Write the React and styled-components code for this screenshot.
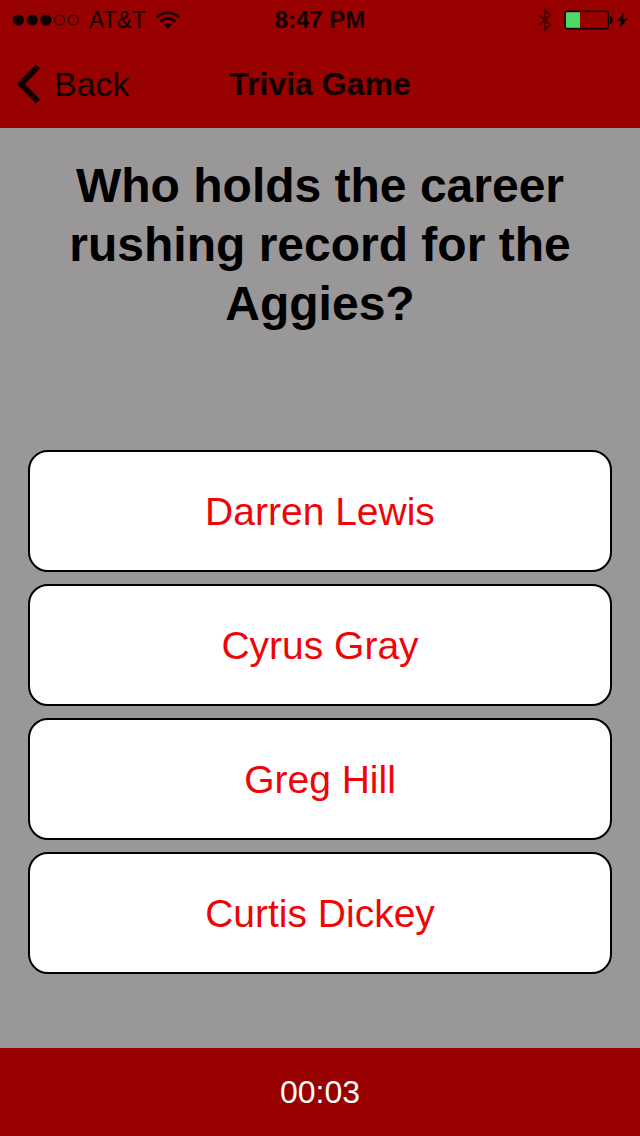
import React, { useState } from "react";
import styled, { createGlobalStyle, ThemeProvider } from "styled-components";

const theme = {
  colors: {
    maroon: "#990000",
    barText: "#120000",
    page: "#9a9799",
    answer: "#ee0508",
    charge: "#4cd964",
  },
  font: '"Liberation Sans", Arial, sans-serif',
};

const GlobalStyle = createGlobalStyle`
  * {
    box-sizing: border-box;
  }

  body {
    margin: 0;
    font-family: ${(props) => props.theme.font};
    background: ${(props) => props.theme.colors.page};
  }
`;

const Screen = styled.div`
  display: flex;
  flex-direction: column;
  min-height: 100vh;
  background: ${(props) => props.theme.colors.page};
`;

const Header = styled.header`
  background: ${(props) => props.theme.colors.maroon};
  color: ${(props) => props.theme.colors.barText};
`;

const StatusBar = styled.div`
  display: grid;
  grid-template-columns: 1fr auto 1fr;
  align-items: center;
  height: 40px;
  padding: 0 12px;
  font-size: 24px;
  line-height: 28px;
`;

const StatusGroup = styled.div`
  display: flex;
  align-items: center;
  justify-content: ${(props) => (props.$end ? "flex-end" : "flex-start")};
  gap: ${(props) => (props.$end ? "12px" : "9px")};
`;

const Carrier = styled.span`
  font-size: 23px;
`;

const Clock = styled.time`
  font-weight: 700;
`;

const NavBar = styled.nav`
  display: grid;
  grid-template-columns: 1fr auto 1fr;
  align-items: center;
  height: 88px;
  padding: 0 16px;
`;

const BackLink = styled.a`
  display: flex;
  align-items: center;
  gap: 12px;
  color: inherit;
  font-size: 34px;
  line-height: 40px;
  text-decoration: none;
`;

const Title = styled.h1`
  margin: 0;
  font-size: 32px;
  font-weight: 700;
  line-height: 40px;
`;

const Content = styled.main`
  display: flex;
  flex: 1;
  flex-direction: column;
  padding: 28px;
`;

const Question = styled.h2`
  min-height: 294px;
  margin: 0;
  color: #000;
  font-size: 48px;
  font-weight: 700;
  line-height: 59px;
  text-align: center;
`;

const Answers = styled.div`
  display: flex;
  flex-direction: column;
  gap: 12px;
`;

const AnswerButton = styled.button`
  height: 122px;
  padding: 2px 20px 0;
  border: 2px solid #000;
  border-radius: 20px;
  background: #fff;
  color: ${(props) => props.theme.colors.answer};
  font-family: inherit;
  font-size: 39px;
  line-height: 48px;
  cursor: pointer;
`;

const Footer = styled.footer`
  display: flex;
  align-items: center;
  justify-content: center;
  height: 88px;
  background: ${(props) => props.theme.colors.maroon};
  color: #fff;
  font-size: 32px;
  line-height: 40px;
`;

const SignalIcon = () => (
  <svg width="68" height="12" viewBox="0 0 68 12" aria-hidden="true">
    {[0, 1, 2, 3, 4].map((i) => (
      <circle
        key={i}
        cx={6.5 + i * 13.7}
        cy="6"
        r={i < 3 ? 5.6 : 5}
        fill={i < 3 ? "currentColor" : "none"}
        stroke={i < 3 ? "none" : "currentColor"}
      />
    ))}
  </svg>
);

const WifiIcon = () => (
  <svg
    width="26"
    height="18"
    viewBox="0 0 26 18"
    fill="none"
    stroke="currentColor"
    strokeWidth="2.7"
    aria-hidden="true"
  >
    <path d="M1.8 6.3a16 16 0 0 1 22.4 0" />
    <path d="M5.7 10.5a10.4 10.4 0 0 1 14.6 0" />
    <path
      d="M13 17.4 9 13.5a5.6 5.6 0 0 1 8 0z"
      fill="currentColor"
      stroke="none"
    />
  </svg>
);

const BluetoothIcon = () => (
  <svg
    width="14"
    height="24"
    viewBox="0 0 14 24"
    fill="none"
    stroke="currentColor"
    strokeWidth="2"
    opacity="0.5"
    aria-hidden="true"
  >
    <path d="M1 6.5 12.5 17 7 22V2l5.5 5L1 17.5" />
  </svg>
);

const BatteryIcon = () => (
  <svg width="64" height="20" viewBox="0 0 64 20" aria-hidden="true">
    <rect
      x="1"
      y="1.2"
      width="43.5"
      height="17.6"
      rx="2.5"
      fill="none"
      stroke="currentColor"
      strokeWidth="1.4"
    />
    <rect
      x="2"
      y="2.2"
      width="14"
      height="15.6"
      rx="1"
      fill={theme.colors.charge}
    />
    <path d="M46 6c4 .6 4 7.400 0 8z" fill="currentColor" />
    <path d="M60.5 2 53 11h4.2L55 18.5 64 8.8h-5z" fill="currentColor" />
  </svg>
);

const ChevronIcon = () => (
  <svg
    width="26"
    height="40"
    viewBox="0 0 26 40"
    fill="none"
    stroke="currentColor"
    strokeWidth="6"
    aria-hidden="true"
  >
    <path d="M22 2.5 5 20l17 17.5" />
  </svg>
);

const answers = ["Darren Lewis", "Cyrus Gray", "Greg Hill", "Curtis Dickey"];

const App = () => {
  const [selected, setSelected] = useState(null);

  return (
    <ThemeProvider theme={theme}>
      <GlobalStyle />
      <Screen>
        <Header>
          <StatusBar>
            <StatusGroup>
              <SignalIcon />
              <Carrier>AT&amp;T</Carrier>
              <WifiIcon />
            </StatusGroup>
            <Clock>8:47 PM</Clock>
            <StatusGroup $end>
              <BluetoothIcon />
              <BatteryIcon />
            </StatusGroup>
          </StatusBar>
          <NavBar>
            <BackLink href="#">
              <ChevronIcon />
              Back
            </BackLink>
            <Title>Trivia Game</Title>
          </NavBar>
        </Header>

        <Content>
          <Question>Who holds the career rushing record for the Aggies?</Question>
          <Answers>
            {answers.map((answer) => (
              <AnswerButton
                key={answer}
                type="button"
                aria-pressed={selected === answer}
                onClick={() => setSelected(answer)}
              >
                {answer}
              </AnswerButton>
            ))}
          </Answers>
        </Content>

        <Footer>00:03</Footer>
      </Screen>
    </ThemeProvider>
  );
};

export default App;
